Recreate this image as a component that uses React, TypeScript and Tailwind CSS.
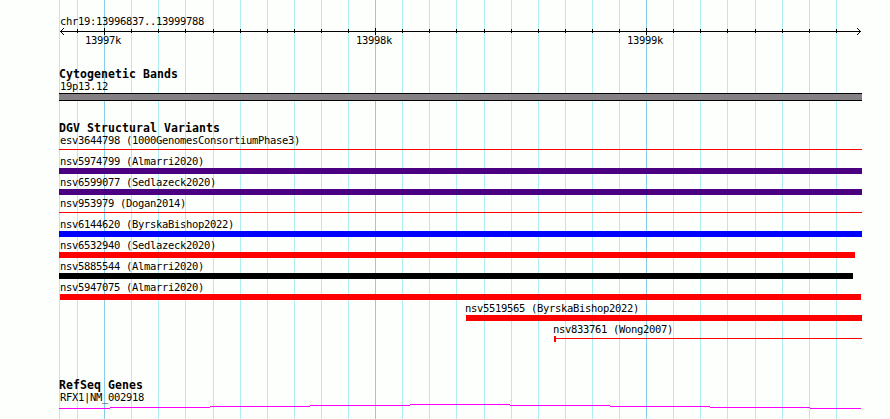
const GRID = [59, 77, 104, 131, 158, 185, 213, 240, 267, 294, 321, 348, 375, 402, 429, 456, 484, 511, 538, 565, 592, 619, 646, 673, 700, 727, 755, 782, 809, 836];
const MAJOR = [104, 375, 646];

type Variant = { name: string; label: number; start: number; end: number; color: string; kind: 'bar' | 'line' | 'flagged' };

const VARIANTS: Variant[] = [
  { name: 'esv3644798 (1000GenomesConsortiumPhase3)', label: 60, start: 59, end: 862, color: 'bg-[#ff0000]', kind: 'line' },
  { name: 'nsv5974799 (Almarri2020)', label: 60, start: 59, end: 862, color: 'bg-[#4b0082]', kind: 'bar' },
  { name: 'nsv6599077 (Sedlazeck2020)', label: 60, start: 59, end: 862, color: 'bg-[#4b0082]', kind: 'bar' },
  { name: 'nsv953979 (Dogan2014)', label: 60, start: 59, end: 862, color: 'bg-[#ff0000]', kind: 'line' },
  { name: 'nsv6144620 (ByrskaBishop2022)', label: 60, start: 59, end: 862, color: 'bg-[#0000ff]', kind: 'bar' },
  { name: 'nsv6532940 (Sedlazeck2020)', label: 60, start: 59, end: 855, color: 'bg-[#ff0000]', kind: 'bar' },
  { name: 'nsv5885544 (Almarri2020)', label: 60, start: 59, end: 853, color: 'bg-black', kind: 'bar' },
  { name: 'nsv5947075 (Almarri2020)', label: 60, start: 60, end: 861, color: 'bg-[#ff0000]', kind: 'bar' },
  { name: 'nsv5519565 (ByrskaBishop2022)', label: 465, start: 466, end: 862, color: 'bg-[#ff0000]', kind: 'bar' },
  { name: 'nsv833761 (Wong2007)', label: 553, start: 554, end: 862, color: 'bg-[#ff0000]', kind: 'flagged' },
];

const labelText = 'block whitespace-pre text-[10.5px] leading-[13px] tracking-[-0.322px]';
const headingText = 'block whitespace-pre pl-[59px] text-[11.5px] font-bold leading-[13px] tracking-[0.077px]';

function GridLines() {
  return (
    <svg className="absolute inset-0" width="890" height="419" shapeRendering="crispEdges">
      {GRID.map(x => (
        <rect key={x} x={x} y="0" width="1" height="419" fill={MAJOR.includes(x) ? '#87ceeb' : '#afeeee'} />
      ))}
    </svg>
  );
}

function Ruler() {
  return (
    <svg className="block" width="890" height="8" shapeRendering="crispEdges">
      <rect x="60" y="3" width="801" height="1" />
      {GRID.slice(1).map(x => (
        <rect key={x} x={x} y={MAJOR.includes(x) ? 0 : 1} width="1" height={MAJOR.includes(x) ? 7 : 4} />
      ))}
      {[1, 2, 3].map(i => (
        <g key={i}>
          <rect x={60 + i} y={3 - i} width="1" height="1" />
          <rect x={60 + i} y={3 + i} width="1" height="1" />
          <rect x={860 - i} y={3 - i} width="1" height="1" />
          <rect x={860 - i} y={3 + i} width="1" height="1" />
        </g>
      ))}
    </svg>
  );
}

function VariantRow({ v }: { v: Variant }) {
  const box = { marginLeft: v.start, width: v.end - v.start };
  return (
    <div className="h-[21px]">
      <span className={labelText} style={{ paddingLeft: v.label }}>{v.name}</span>
      <div className="flex h-1.5 items-start" style={box}>
        {v.kind === 'flagged' && <div className={`h-1.5 w-0.5 ${v.color}`} />}
        <div className={`flex-1 ${v.kind === 'bar' ? 'h-1.5' : 'mt-0.5 h-px'} ${v.color}`} />
      </div>
    </div>
  );
}

function GeneLine() {
  return (
    <svg className="block" width="890" height="6" shapeRendering="crispEdges" fill="#ff00ff">
      <rect x="59" y="4" width="51" height="1" />
      {[3, 2, 1, 0, 1, 2, 3].map((y, i) => (
        <rect key={i} x={110 + i * 100} y={y} width="100" height="1" />
      ))}
      <rect x="810" y="4" width="51" height="1" />
    </svg>
  );
}

export default function App() {
  return (
    <div className="relative h-[419px] w-[890px] overflow-hidden bg-[#fdfffc] font-['DejaVu_Sans_Mono',monospace] text-black">
      <GridLines />
      <div className="relative flex flex-col">
        <section className="h-[68px] pt-[15px]">
          <span className={`${labelText} pl-[60px]`}>chr19:13996837..13999788</span>
          <Ruler />
          <div className="-mt-0.5 flex gap-[235px] pl-[85px]">
            <span className={labelText}>13997k</span>
            <span className={labelText}>13998k</span>
            <span className={labelText}>13999k</span>
          </div>
        </section>
        <section className="h-[54px]">
          <h2 className={headingText}>Cytogenetic Bands</h2>
          <span className={`${labelText} -mt-px pl-[60px]`}>19p13.12</span>
          <div className="ml-[59px] h-2 w-[803px] border-y border-black bg-[#848084]" />
        </section>
        <section className="h-[257px]">
          <h2 className={headingText}>DGV Structural Variants</h2>
          <div className="-mt-px">
            {VARIANTS.map(v => <VariantRow key={v.name} v={v} />)}
          </div>
        </section>
        <section>
          <h2 className={headingText}>RefSeq Genes</h2>
          <span className={`${labelText} -mt-px pl-[60px]`}>RFX1|NM_002918</span>
          <GeneLine />
        </section>
      </div>
    </div>
  );
}
